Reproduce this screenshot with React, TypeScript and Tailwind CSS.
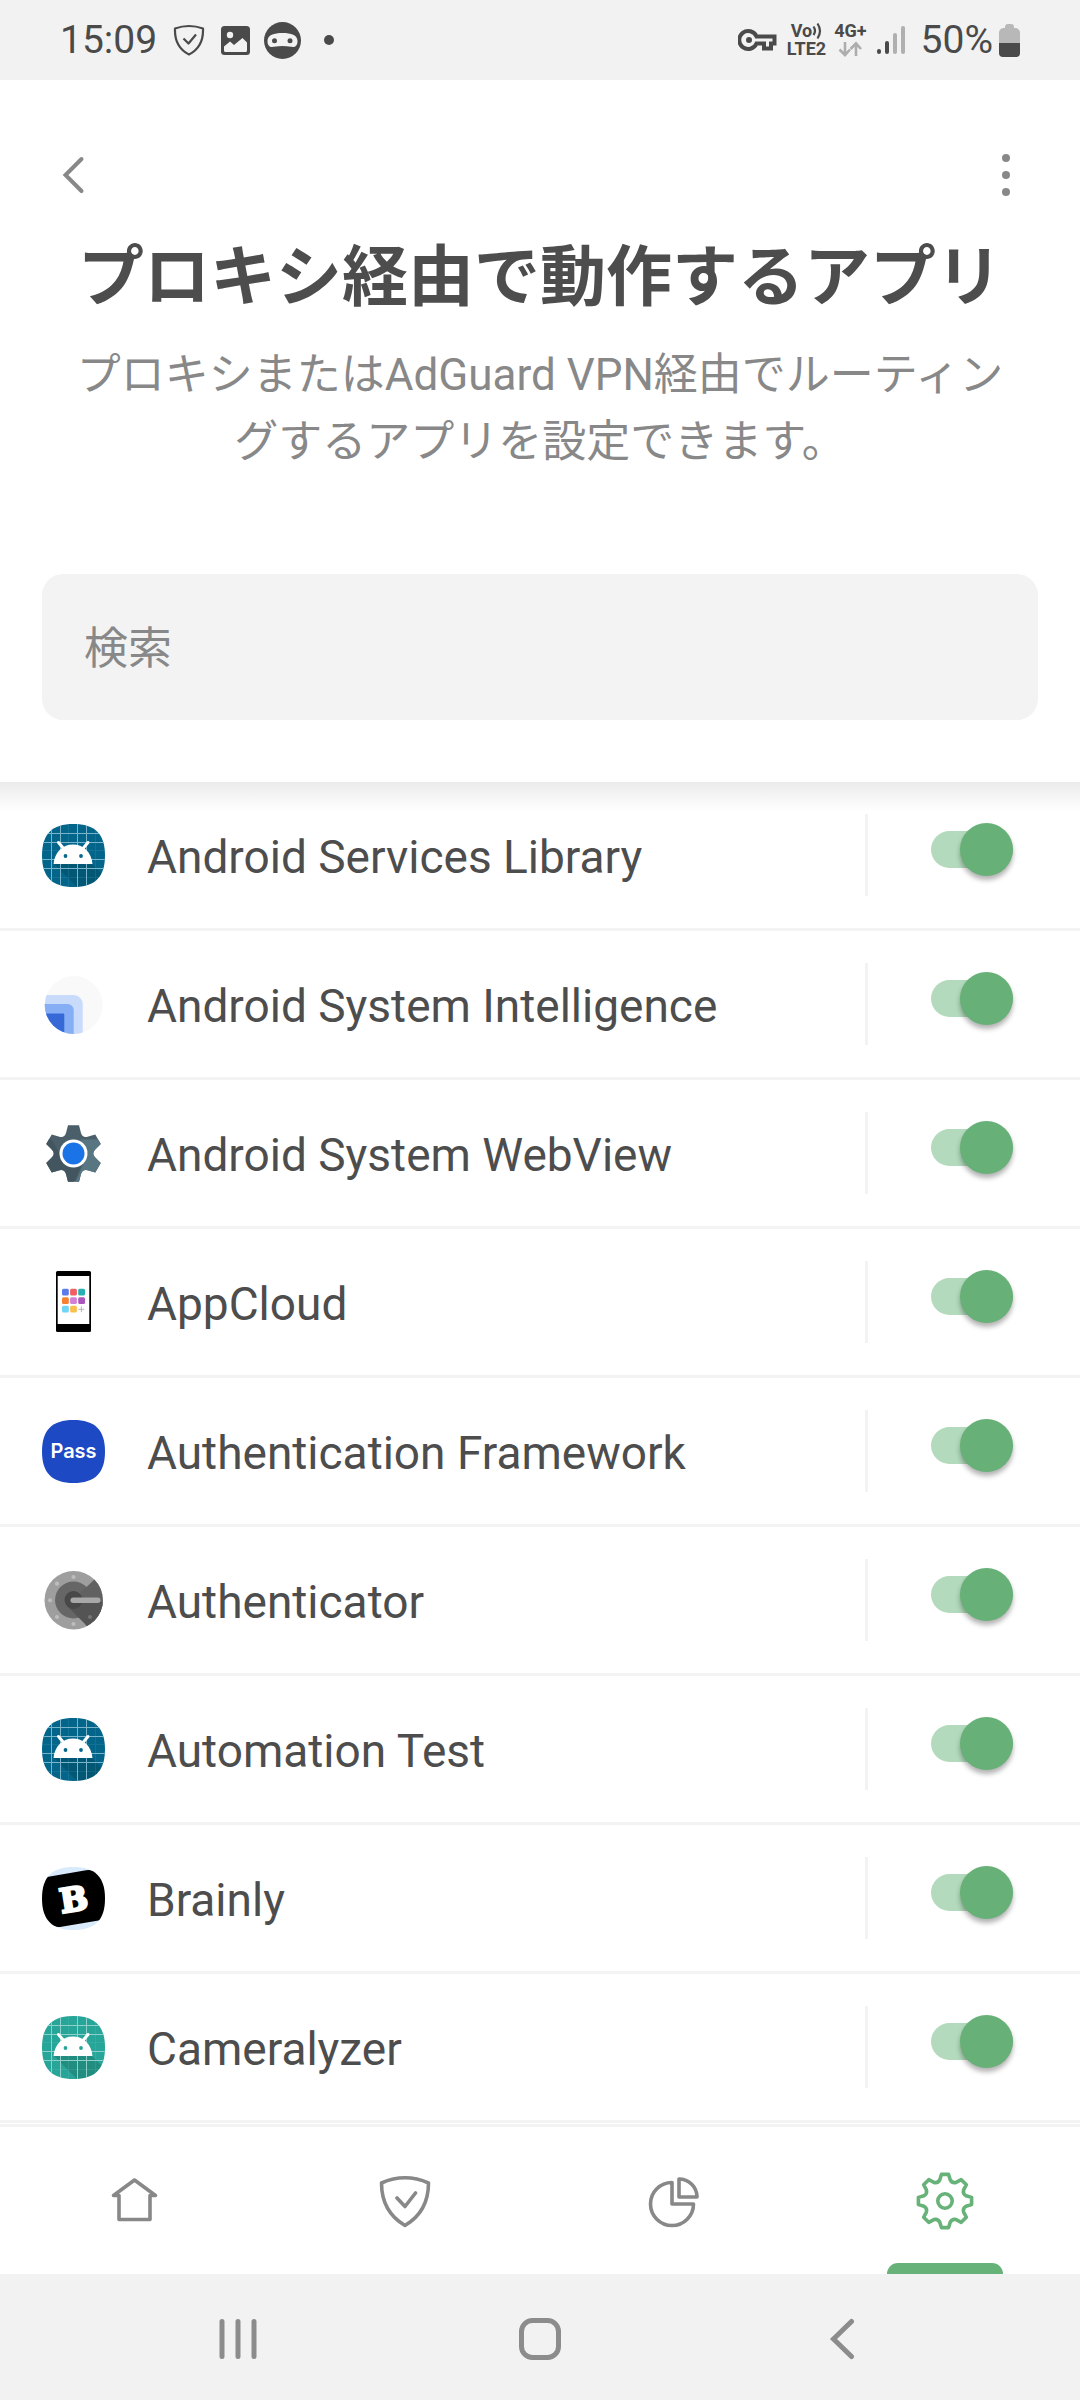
import { useState, type ReactNode } from "react";
import clsx from "clsx";

const SQUIRCLE =
  "M31.5 0C53 0 63 10 63 31.5S53 63 31.5 63 0 53 0 31.5 10 0 31.5 0Z";

// outline of a cog: each tooth is the same set of points turned round the centre
function gearPath(
  cx: number,
  cy: number,
  teeth: number,
  tip: [number, number],
  root: [number, number],
  valley: number
) {
  const step = (Math.PI * 2) / teeth;
  const at = (x: number, y: number, angle: number) => {
    const px = cx + x * Math.cos(angle) - y * Math.sin(angle);
    const py = cy + x * Math.sin(angle) + y * Math.cos(angle);
    return `${px.toFixed(2)} ${py.toFixed(2)}`;
  };
  let d = "";
  for (let i = 0; i < teeth; i++) {
    const a = i * step;
    d += `${i === 0 ? "M" : "L"}${at(-tip[0], -tip[1], a)}`;
    d += `L${at(tip[0], -tip[1], a)}L${at(root[0], -root[1], a)}`;
    d += `Q${at(0, -valley, a + step / 2)} ${at(-root[0], -root[1], a + step)}`;
  }
  return d + "Z";
}

function AppSvg({ children }: { children: ReactNode }) {
  return (
    <svg viewBox="0 0 63 63" className="size-[63px] shrink-0" aria-hidden="true">
      {children}
    </svg>
  );
}

function AndroidIcon({ id, color, line }: { id: string; color: string; line: string }) {
  return (
    <AppSvg>
      <clipPath id={id}>
        <path d={SQUIRCLE} />
      </clipPath>
      <g clipPath={`url(#${id})`}>
        <rect width="63" height="63" fill={color} />
        <path d="M12 40H50L63 53V63H35Z" fill="#000" opacity="0.14" />
        <path
          d="M9.5 0V63M18.5 0V63M35.5 0V63M44.5 0V63M0 9.5H63M0 18.5H63M0 35.5H63M0 44.5H63"
          stroke={line}
          strokeWidth="1"
        />
        <path d="M26.5 0V63M53.5 0V63M0 53.5H63M0 26.5H63" stroke={line} strokeWidth="1" opacity="0.15" />
        <path d="M16.5 18.5L22 25M46 18.5L40.5 25" stroke="#fff" strokeWidth="3" strokeLinecap="round" />
        <path d="M11.5 40C12.5 28 21 20.5 31 20.5S49.5 28 50.5 40Z" fill="#fff" />
        <circle cx="23.5" cy="32" r="1.9" fill={color} />
        <circle cx="39" cy="32" r="1.9" fill={color} />
      </g>
    </AppSvg>
  );
}

function IntelligenceIcon() {
  return (
    <AppSvg>
      <clipPath id="intelligence">
        <circle cx="31.7" cy="32" r="29" />
      </clipPath>
      <g clipPath="url(#intelligence)">
        <rect width="63" height="63" fill="#f9f9fa" />
        <rect x="-20" y="22" width="60.7" height="60" rx="9" fill="#c8dbfb" />
        <rect x="-20" y="31" width="51.7" height="60" rx="6" fill="#86aef5" />
        <rect x="-20" y="40.5" width="42.3" height="60" rx="1" fill="#3769d6" />
      </g>
    </AppSvg>
  );
}

function WebViewIcon() {
  return (
    <AppSvg>
      <clipPath id="webview">
        <path d={gearPath(31.5, 31.5, 6, [5.5, 28.3], [7.5, 20.5], 18)} />
      </clipPath>
      <g clipPath="url(#webview)">
        <rect width="63" height="63" fill="#4a5f69" />
        <path d="M0 12L10 18L22 40L40 42L31 63H0Z" fill="#435660" />
        <path d="M38 17.5H63V63H32L40 45L46 31Z" fill="#587682" />
      </g>
      <circle cx="31.5" cy="31.5" r="14" fill="#fff" />
      <circle cx="31.5" cy="31.5" r="11" fill="#1b73e8" />
    </AppSvg>
  );
}

const tiles = [
  "#5b7be8", "#ef5f62", "#27afb5",
  "#f8812f", "#d27fd6", "#ad55bf",
  "#6ed6f4", "#fac04c",
];

function AppCloudIcon() {
  return (
    <AppSvg>
      <rect x="14" y="0" width="35" height="61" rx="1.5" fill="#000" />
      <rect x="15.7" y="5" width="31.6" height="48" fill="#fff" />
      {tiles.map((tile, i) => (
        <rect
          key={tile}
          x={20 + (i % 3) * 8.1}
          y={17.8 + Math.floor(i / 3) * 8.5}
          width="6.8"
          height="6.8"
          rx="1.5"
          fill={tile}
        />
      ))}
      <path d="M36.5 38.3H42.3M39.4 35.4V41.2" stroke="#b5b5b5" strokeWidth="1" />
    </AppSvg>
  );
}

function PassIcon() {
  return (
    <AppSvg>
      <path d={SQUIRCLE} fill="#1e49c5" />
      <text x="31.5" y="38" textAnchor="middle" fill="#fff" className="font-[Inter,sans-serif] text-[20px] font-semibold">
        Pass
      </text>
    </AppSvg>
  );
}

function AuthenticatorIcon() {
  return (
    <AppSvg>
      <clipPath id="authenticator">
        <circle cx="31.7" cy="31.2" r="29.2" />
      </clipPath>
      <g clipPath="url(#authenticator)">
        <rect width="63" height="63" fill="#9e9e9e" />
        <circle cx="31.5" cy="31" r="18.5" fill="#666" />
        <path d="M44.5 18L53 10L64 20V44L45 58L31 31Z" fill="#616161" />
        <path d="M25 37L45 57L64 44V33H31Z" fill="#545454" />
        <circle cx="31.5" cy="31" r="9" fill="#484848" />
      </g>
      <rect x="28.5" y="28.5" width="30" height="5.4" rx="2.7" fill="#a8a8a8" />
      <g fill="#bdbdbd">
        <circle cx="31.5" cy="8" r="2.1" />
        <circle cx="15" cy="14.7" r="2.1" />
        <circle cx="8" cy="31.3" r="2.1" />
        <circle cx="15" cy="48" r="2.1" />
        <circle cx="31.5" cy="55" r="2.1" />
      </g>
      <circle cx="48" cy="48" r="2" fill="#757575" />
    </AppSvg>
  );
}

function BrainlyIcon() {
  return (
    <AppSvg>
      <clipPath id="brainly">
        <path d={SQUIRCLE} />
      </clipPath>
      <g clipPath="url(#brainly)">
        <rect width="63" height="63" fill="#d8eafc" />
        <path d="M0 10.5L5 10L44 3.3Q54 2 58 10L64 20V52L58 53.3L18 60Q8 61 4 52L-2 40Z" fill="#000" />
      </g>
      <text
        x="31.5"
        y="44"
        textAnchor="middle"
        transform="rotate(-9 31.5 31.5)"
        fill="#fff"
        stroke="#fff"
        strokeWidth="2.5"
        className="font-['DejaVu_Serif',serif] text-[33px] font-bold"
      >
        B
      </text>
    </AppSvg>
  );
}

const apps = [
  { name: "Android Services Library", icon: <AndroidIcon id="services" color="#04668a" line="#7ab6ca" /> },
  { name: "Android System Intelligence", icon: <IntelligenceIcon /> },
  { name: "Android System WebView", icon: <WebViewIcon /> },
  { name: "AppCloud", icon: <AppCloudIcon /> },
  { name: "Authentication Framework", icon: <PassIcon /> },
  { name: "Authenticator", icon: <AuthenticatorIcon /> },
  { name: "Automation Test", icon: <AndroidIcon id="automation" color="#04668a" line="#7ab6ca" /> },
  { name: "Brainly", icon: <BrainlyIcon /> },
  { name: "Cameralyzer", icon: <AndroidIcon id="cameralyzer" color="#27a598" line="#8ed2ca" /> },
];

function StatusBar() {
  return (
    <div className="flex h-20 items-center justify-between bg-[#f2f2f2] px-[60px] text-[#4a4a4a]">
      <div className="flex items-center">
        <span className="text-[39px] leading-none">15:09</span>
        <svg viewBox="0 0 32 32" className="ml-4 size-8" fill="none" stroke="currentColor" strokeWidth="2.2" strokeLinejoin="round" aria-hidden="true">
          <path d="M2 4.5Q16 -0.5 30 4.5C30.5 17 26 25.5 16 30.5C6 25.5 1.5 17 2 4.5Z" />
          <path d="M10.5 14.5L15.5 19.5L23 10.5" />
        </svg>
        <svg viewBox="0 0 29 29" className="ml-4 size-[29px]" aria-hidden="true">
          <rect width="29" height="29" rx="3.5" fill="currentColor" />
          <circle cx="9" cy="9" r="3.2" fill="#f2f2f2" />
          <path d="M3 20.5L9 15.5L13 19L21.5 12L26 16.5V24.5Q26 26 24.5 26H4.5Q3 26 3 24.5Z" fill="#f2f2f2" />
        </svg>
        <svg viewBox="0 0 37 37" className="ml-[14px] size-[37px]" aria-hidden="true">
          <circle cx="18.5" cy="18.5" r="18.5" fill="currentColor" />
          <path d="M3.5 19C3.5 13 10 11 18.5 11S33.5 13 33.5 19C33.5 24 31 25.5 27 24.8Q18.5 23 10 24.8C6 25.5 3.5 24 3.5 19Z" fill="#f2f2f2" />
          <circle cx="10.5" cy="18.7" r="2.5" fill="currentColor" />
          <circle cx="26" cy="18.7" r="2.5" fill="currentColor" />
        </svg>
        <span className="ml-[23px] size-[10px] rounded-full bg-current" />
      </div>
      <div className="flex items-center">
        <svg viewBox="0 0 39 24" className="h-6 w-[39px]" fill="none" stroke="currentColor" strokeWidth="4" aria-hidden="true">
          <path d="M18.5 8.5H36.5V15.5H33V20.5H26V15.5H18.5A9 9 0 1 1 18.5 8.5Z" />
          <circle cx="11" cy="12" r="3" fill="currentColor" stroke="none" />
        </svg>
        <div className="ml-[10px] flex flex-col items-center text-[18px] leading-[18px] font-bold">
          <span className="flex items-center">
            Vo
            <svg viewBox="0 0 10 18" className="h-[18px] w-[10px]" fill="none" stroke="currentColor" strokeWidth="2.2" aria-hidden="true">
              <path d="M1.5 4.5Q4.5 9 1.5 13M5.5 1.5Q10.5 9 5.5 16.5" />
            </svg>
          </span>
          <span>LTE2</span>
        </div>
        <div className="ml-2 flex flex-col items-center text-[18px] leading-[18px] font-bold">
          <span>4G+</span>
          <svg viewBox="0 0 24 18" className="h-[18px] w-6" fill="none" stroke="#adadad" strokeWidth="2.6" aria-hidden="true">
            <path d="M7 2V15M1.5 9.5L7 15L12 9.5M18 16V4M12.5 9L18 3.5L23 9" />
          </svg>
        </div>
        <svg viewBox="0 0 28 30" className="ml-[10px] h-[30px] w-7" strokeWidth="4" strokeLinecap="round" aria-hidden="true">
          <path d="M2 26V27M10 18V27" stroke="#4a4a4a" />
          <path d="M18 10V27M26 3V27" stroke="#b0b0b0" />
        </svg>
        <span className="ml-4 text-[39px] leading-none">50%</span>
        <svg viewBox="0 0 21 33" className="ml-[6px] h-[33px] w-[21px]" aria-hidden="true">
          <path d="M6 3Q6 0 9 0H12Q15 0 15 3V4H17Q21 5 21 9V19H0V9Q0 5 4 4H6Z" fill="#b8b8b8" />
          <path d="M0 19H21V29Q21 33 17 33H4Q0 33 0 29Z" fill="currentColor" />
        </svg>
      </div>
    </div>
  );
}

function Header() {
  return (
    <header className="relative bg-white px-[42px] pt-16 pb-[62px]">
      <div className="flex h-[62px] items-center justify-between px-[15px] text-[#888]">
        <button type="button" aria-label="戻る">
          <svg viewBox="0 0 32 40" className="h-10 w-8" fill="none" stroke="currentColor" strokeWidth="4" strokeLinecap="round" aria-hidden="true">
            <path d="M24.5 4L8.5 20L24.5 36" />
          </svg>
        </button>
        <button type="button" aria-label="メニュー">
          <svg viewBox="0 0 34 44" className="h-11 w-[34px]" fill="currentColor" aria-hidden="true">
            <circle cx="17" cy="5" r="4" />
            <circle cx="17" cy="22" r="4" />
            <circle cx="17" cy="39" r="4" />
          </svg>
        </button>
      </div>
      <h1 className="mt-6 text-center text-[66px] leading-24 font-bold text-[#4d4d4d]">
        プロキシ経由で動作するアプリ
      </h1>
      <p className="mx-auto mt-4 max-w-[940px] text-center text-[44px] leading-[67px] text-[#888]">
        プロキシまたはAdGuard VPN経由でルーティングするアプリを設定できます。
      </p>
      <input
        type="search"
        aria-label="検索"
        placeholder="検索"
        className="mt-[98px] h-[146px] w-full rounded-[21px] bg-[#f3f3f3] px-[42px] pt-1 text-[44px] outline-none placeholder:text-[#888]"
      />
      <div className="pointer-events-none absolute inset-x-0 top-full h-[30px] bg-linear-to-b from-black/8 to-transparent" />
    </header>
  );
}

function AppRow({ name, icon }: { name: string; icon: ReactNode }) {
  const [checked, setChecked] = useState(true);

  return (
    <li className="border-b-3 border-[#f3f3f3]">
      <label className="flex h-[146px] items-center pl-[42px]">
        {icon}
        <span className="ml-[42px] flex-1 pt-1 text-[46px] leading-[60px] text-[#4d4d4d]">{name}</span>
        <span className="flex h-[82px] w-[215px] items-center border-l-3 border-[#f3f3f3] pb-3 pl-[63px]">
          <input
            type="checkbox"
            role="switch"
            checked={checked}
            onChange={() => setChecked(!checked)}
            className={clsx(
              "flex h-[37px] w-[82px] appearance-none items-center rounded-full",
              "before:size-[53px] before:shrink-0 before:rounded-full before:shadow-[0_4px_5px_rgba(0,0,0,0.3)]",
              checked
                ? "justify-end bg-[#b3dabc] before:bg-[#67b077]"
                : "justify-start bg-gray-300 before:bg-gray-100"
            )}
          />
        </span>
      </label>
    </li>
  );
}

const tabs = [
  {
    label: "ホーム",
    icon: <path d="M14 24.5H8.5L29.5 9L50.5 24.5H45V48.5H14Z" />,
  },
  {
    label: "保護",
    icon: <path d="M6.5 12Q30 1.5 53.5 12C53.5 31 46 45 30 54.5C14 45 6.5 31 6.5 12ZM22 27L30 35.5L40.5 22" />,
  },
  {
    label: "統計",
    icon: <path d="M27 11.5A21.5 21.5 0 1 0 48.5 33H27ZM34 8A18 18 0 0 1 52 26H34Z" />,
  },
  {
    label: "設定",
    icon: (
      <>
        <path d={gearPath(30, 30, 8, [3.6, 26.6], [5.3, 21], 19)} />
        <circle cx="30" cy="30" r="7.2" />
      </>
    ),
    active: true,
  },
];

function TabBar() {
  return (
    <nav className="mt-px grid h-[150px] grid-cols-4 border-t-3 border-[#f3f3f3] bg-white">
      {tabs.map((tab) => (
        <a
          key={tab.label}
          href="#"
          aria-label={tab.label}
          className={clsx(
            "relative flex items-center justify-center",
            tab.active ? "text-[#67b279]" : "text-[#888]"
          )}
        >
          <svg viewBox="0 0 60 60" className="size-[60px]" fill="none" stroke="currentColor" strokeWidth="3.6" strokeLinejoin="round" strokeLinecap="round" aria-hidden="true">
            {tab.icon}
          </svg>
          {tab.active && (
            <span className="absolute bottom-0 h-[11px] w-[116px] rounded-t-[11px] bg-[#67b279]" />
          )}
        </a>
      ))}
    </nav>
  );
}

function SystemBar() {
  return (
    <div className="flex h-[126px] items-center justify-center bg-[#f2f2f2] pt-1 text-[#8c8c8c]">
      <div className="grid w-[84%] grid-cols-3 justify-items-center">
        <button type="button" aria-label="最近">
          <svg viewBox="0 0 42 42" className="size-[42px]" fill="none" stroke="currentColor" strokeWidth="5" strokeLinecap="round" aria-hidden="true">
            <path d="M5 3.5V38.5M21 3.5V38.5M37 3.5V38.5" />
          </svg>
        </button>
        <button type="button" aria-label="ホーム画面">
          <svg viewBox="0 0 42 42" className="size-[42px]" fill="none" stroke="currentColor" strokeWidth="5" aria-hidden="true">
            <rect x="2.5" y="2.5" width="37" height="37" rx="11" />
          </svg>
        </button>
        <button type="button" aria-label="戻る">
          <svg viewBox="0 0 42 42" className="size-[42px]" fill="none" stroke="currentColor" strokeWidth="5" strokeLinecap="round" aria-hidden="true">
            <path d="M30.5 3.5L12.5 21L30.5 38.5" />
          </svg>
        </button>
      </div>
    </div>
  );
}

export default function App() {
  return (
    <div lang="ja" className="flex min-h-screen flex-col bg-white font-[Roboto,'Noto_Sans_CJK_JP',sans-serif]">
      <StatusBar />
      <Header />
      <ul className="flex-1">
        {apps.map((app) => (
          <AppRow key={app.name} name={app.name} icon={app.icon} />
        ))}
      </ul>
      <TabBar />
      <SystemBar />
    </div>
  );
}
